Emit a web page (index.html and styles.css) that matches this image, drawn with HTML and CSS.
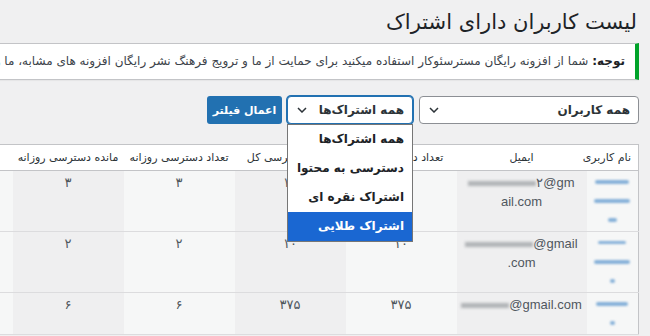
FILE: index.html
```html
<!DOCTYPE html>
<html lang="fa" dir="rtl">
<head>
    <title>لیست کاربران دارای اشتراک</title>
    <meta charset="UTF-8">
    <meta name="viewport" content="width=device-width, initial-scale=1.0">
    <link rel="stylesheet" href="styles.css">
</head>
<body>
    <div class="wrap">
        <h1>لیست کاربران دارای اشتراک</h1>

        <div class="notice">
            <p><strong>توجه:</strong> شما از افزونه رایگان مسترسئوکار استفاده میکنید برای حمایت از ما و ترویج فرهنگ نشر رایگان افزونه های مشابه، ما را به دوستان خود معرفی کنید.</p>
        </div>

        <div class="filters">
            <div class="select select-users">
                <span>همه کاربران</span>
                <svg class="chevron" width="10" height="6" viewBox="0 0 10 6"><path d="M1 1l4 4 4-4" fill="none" stroke="#2c3338" stroke-width="1.5"/></svg>
            </div>
            <div class="select select-plans is-open">
                <span>همه اشتراک‌ها</span>
                <svg class="chevron" width="10" height="6" viewBox="0 0 10 6"><path d="M1 1l4 4 4-4" fill="none" stroke="#2c3338" stroke-width="1.5"/></svg>
                <ul class="options">
                    <li>همه اشتراک‌ها</li>
                    <li>دسترسی به محتوا</li>
                    <li>اشتراک نقره ای</li>
                    <li class="active">اشتراک طلایی</li>
                </ul>
            </div>
            <button class="button">اعمال فیلتر</button>
        </div>

        <table class="subs-table">
            <colgroup>
                <col class="c-user">
                <col class="c-email">
                <col class="c-num">
                <col class="c-num">
                <col class="c-num">
                <col class="c-num">
                <col class="c-num">
            </colgroup>
            <thead>
                <tr>
                    <th class="th-user">نام کاربری</th>
                    <th>ایمیل</th>
                    <th>تعداد دسترسی کل</th>
                    <th>مانده دسترسی کل</th>
                    <th>تعداد دسترسی روزانه</th>
                    <th>مانده دسترسی روزانه</th>
                    <th></th>
                </tr>
            </thead>
            <tbody>
                <tr>
                    <td><div class="user-lines"><span class="blur-link w30"></span><span class="blur-link w36"></span><span class="blur-link w8"></span></div></td>
                    <td class="email-cell dark"><span dir="ltr"><span class="blur-text w70"></span>۲@gm<br>ail.com</span></td>
                    <td>۱۰</td>
                    <td class="dark">۱۰</td>
                    <td>۳</td>
                    <td class="dark">۳</td>
                    <td></td>
                </tr>
                <tr>
                    <td><div class="user-lines"><span class="blur-link w28 thin"></span><span class="blur-link w36"></span><span class="blur-link w4"></span></div></td>
                    <td class="email-cell dark"><span dir="ltr"><span class="blur-text w70"></span>@gmail<br>.com</span></td>
                    <td>۱۰</td>
                    <td class="dark">۱۰</td>
                    <td>۲</td>
                    <td class="dark">۲</td>
                    <td></td>
                </tr>
                <tr>
                    <td><div class="user-lines"><span class="blur-link w32"></span><span class="blur-link w4"></span></div></td>
                    <td class="email-cell dark"><span dir="ltr"><span class="blur-text w46"></span>@gmail.com</span></td>
                    <td>۳۷۵</td>
                    <td class="dark">۳۷۵</td>
                    <td>۶</td>
                    <td class="dark">۶</td>
                    <td></td>
                </tr>
            </tbody>
        </table>
    </div>
</body>
</html>
```

FILE: styles.css
```css
body {
    margin: 0;
    background: #f0f0f1;
    color: #3c434a;
    font-family: "DejaVu Sans", sans-serif;
    font-size: 13px;
    direction: rtl;
    overflow: hidden;
}
.wrap {
    width: 740px;
    margin-right: 11px;
}
h1 {
    margin: 0;
    padding: 8px 2px 6px 0;
    font-size: 21px;
    font-weight: 400;
    line-height: 1.4;
    color: #1d2327;
}
.notice {
    background: #fff;
    border: 1px solid #c3c4c7;
    border-right: 4px solid #00a32a;
    box-shadow: 0 1px 1px rgba(0, 0, 0, .04);
    margin: 0;
    padding: 0 10px;
}
.notice p {
    margin: 0;
    height: 35px;
    line-height: 35px;
    white-space: nowrap;
    overflow: hidden;
    font-size: 12px;
    color: #3c434a;
}
.notice strong {
    color: #1d2327;
}

/* filters */
.filters {
    display: flex;
    gap: 5px;
    margin: 16px 0 20px;
    height: 28px;
}
.select {
    position: relative;
    display: flex;
    align-items: center;
    justify-content: space-between;
    box-sizing: border-box;
    height: 28px;
    padding: 0 8px 0 9px;
    background: #fff;
    border: 1px solid #8c8f94;
    border-radius: 4px;
    font-size: 12px;
    font-weight: 700;
    color: #2c3338;
    white-space: nowrap;
}
.select-users {
    width: 220px;
    margin-left: 1px;
}
.select-plans {
    width: 126px;
    border-color: #2271b1;
    box-shadow: 0 0 0 1px #2271b1;
}
.chevron {
    flex: none;
}
.options {
    position: absolute;
    top: 27px;
    right: -1px;
    width: 126px;
    box-sizing: border-box;
    margin: 0;
    padding: 0;
    list-style: none;
    background: #fff;
    border: 1px solid #767676;
    z-index: 5;
}
.options li {
    height: 29px;
    line-height: 29px;
    padding: 0 8px;
    font-size: 12px;
    font-weight: 700;
    color: #1d2327;
    white-space: nowrap;
}
.options li.active {
    background: #1a67d2;
    color: #fff;
}
.button {
    width: 75px;
    height: 28px;
    padding: 0;
    border: 0;
    border-radius: 3px;
    background: #2271b1;
    color: #fff;
    font-family: inherit;
    font-size: 11px;
    font-weight: 700;
    white-space: nowrap;
}

/* table */
.subs-table {
    width: 737px;
    table-layout: fixed;
    border-collapse: collapse;
    border: 1px solid #c3c4c7;
    background: #f6f7f7;
}
.c-user { width: 52px; }
.c-email { width: 130px; }
.c-num { width: 111px; }
.subs-table th {
    height: 25px;
    padding: 0 4px;
    background: #fff;
    font-weight: 400;
    font-size: 11px;
    color: #2c3338;
    text-align: center;
    white-space: nowrap;
    overflow: hidden;
    border-bottom: 1px solid #c3c4c7;
}
.subs-table th.th-user {
    text-align: right;
    padding-right: 7px;
    overflow: visible;
}
.subs-table td {
    padding: 2px 4px 1px;
    line-height: 19px;
    vertical-align: top;
    text-align: center;
    color: #50575e;
    border-bottom: 1px solid #dcdcde;
}
.subs-table td.dark {
    background: #efeff0;
}
.email-cell {
    font-family: "Liberation Sans", sans-serif;
    font-size: 13px;
}
.user-lines {
    display: flex;
    flex-direction: column;
    align-items: center;
}
.blur-link {
    height: 4px;
    margin: 7px 0 8px;
    background: #86b1d9;
    border-radius: 2px;
    filter: blur(1.2px);
}
.blur-link.thin {
    height: 3px;
    margin-bottom: 9px;
}
.blur-text {
    display: inline-block;
    height: 5px;
    vertical-align: middle;
    background: #b0b3b6;
    filter: blur(1.4px);
}
.w4 { width: 5px; }
.w8 { width: 9px; }
.w28 { width: 28px; }
.w30 { width: 34px; }
.w32 { width: 32px; }
.w36 { width: 36px; }
.w46 { width: 48px; }
.w70 { width: 68px; }
```
